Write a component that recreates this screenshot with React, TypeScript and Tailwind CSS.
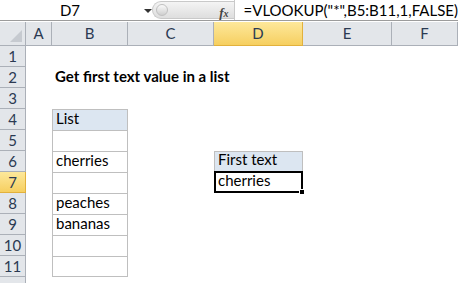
import React from 'react';

const cols = ['A', 'B', 'C', 'D', 'E', 'F'];
const rows = [1, 2, 3, 4, 5, 6, 7, 8, 9, 10, 11, 12];
const font = { fontFamily: 'Lato, "Open Sans", "Liberation Sans", sans-serif' };

const listCells: Record<number, string> = { 4: 'List', 5: '', 6: 'cherries', 7: '', 8: 'peaches', 9: 'bananas', 10: '', 11: '' };

export default function App() {
    return (
        <div className="w-[458px] h-[283px] overflow-hidden bg-white text-[15px] text-black" style={font}>
            {/* Formula bar */}
            <div className="flex h-[21px] items-stretch border-b border-[#9c9c9c]">
                <div className="w-[158px] flex items-center relative">
                    <span className="w-[140px] text-center">D7</span>
                    <span className="absolute left-[144px] top-[9px] w-0 h-0 border-l-[4px] border-r-[4px] border-t-[4px] border-l-transparent border-r-transparent border-t-[#333]" />
                </div>
                <div className="w-[84px] my-[1px] rounded-l-full bg-gradient-to-b from-[#f4f4f4] to-[#dedede] border border-r-0 border-[#c9c9c9] flex items-center relative">
                    <span className="ml-[3px] w-[12px] h-[12px] rounded-full bg-gradient-to-b from-[#fafafa] to-[#cfcfcf] border border-[#c0c0c0]" />
                    <span className="absolute right-[5px] top-[1px] italic font-bold text-[13px] text-[#444]" style={{ fontFamily: '"Liberation Serif", serif' }}>f<span className="text-[10px]">x</span></span>
                </div>
                <div className="w-px bg-[#c9c9c9]" />
                <div className="flex-1 flex items-center pl-[9px] whitespace-nowrap">=VLOOKUP("*",B5:B11,1,FALSE)</div>
            </div>

            {/* Sheet */}
            <div className="mt-px grid grid-cols-[26px_26px_76px_86px_89px_89px_1fr] grid-rows-[24px_repeat(12,21px)]">
                <div className="bg-[#e3e6ea] border-r border-b border-[#abb0b8] relative">
                    <span className="absolute right-[3px] bottom-[3px] w-0 h-0" style={{ borderBottom: '12px solid #c6cad0', borderLeft: '12px solid transparent' }} />
                </div>
                {cols.map(c => (
                    <div key={c} className={`flex items-center justify-center border-r border-b text-[#2b3a52] ${c === 'D' ? 'bg-gradient-to-b from-[#fde89a] to-[#f6cf5f] border-[#e2b13c]' : 'bg-[#e3e6ea] border-[#abb0b8]'}`}>{c}</div>
                ))}
                {rows.map(r => (
                    <React.Fragment key={r}>
                        <div className={`flex items-center justify-center border-r border-b text-[#2b3a52] ${r === 7 ? 'bg-gradient-to-b from-[#fde89a] to-[#f6cf5f] border-[#e2b13c]' : 'bg-[#e3e6ea] border-[#abb0b8]'}`}>{r < 12 ? r : ''}</div>
                        <div />
                        {listCells[r] !== undefined ? (
                            <div className={`border-l border-r border-t border-[#bfbfbf] px-[3px] flex items-end pb-[1px] ${r === 4 ? 'bg-[#dce6f1]' : ''} ${r === 11 ? 'border-b' : ''}`}>{listCells[r]}</div>
                        ) : r === 2 ? (
                            <div className="relative"><span className="absolute left-[3px] bottom-[1px] whitespace-nowrap font-bold text-[15px]">Get first text value in a list</span></div>
                        ) : <div />}
                        <div />
                        {r === 6 ? (
                            <div className="border border-[#bfbfbf] bg-[#dce6f1] px-[3px] flex items-end pb-[1px]">First text</div>
                        ) : r === 7 ? (
                            <div className="relative border-2 border-black -mt-px px-[2px] flex items-end">cherries
                                <span className="absolute -right-[4px] -bottom-[4px] w-[6px] h-[6px] bg-black border border-white" />
                            </div>
                        ) : <div />}
                        <div />
                        <div />
                    </React.Fragment>
                ))}
            </div>
        </div>
    );
}
